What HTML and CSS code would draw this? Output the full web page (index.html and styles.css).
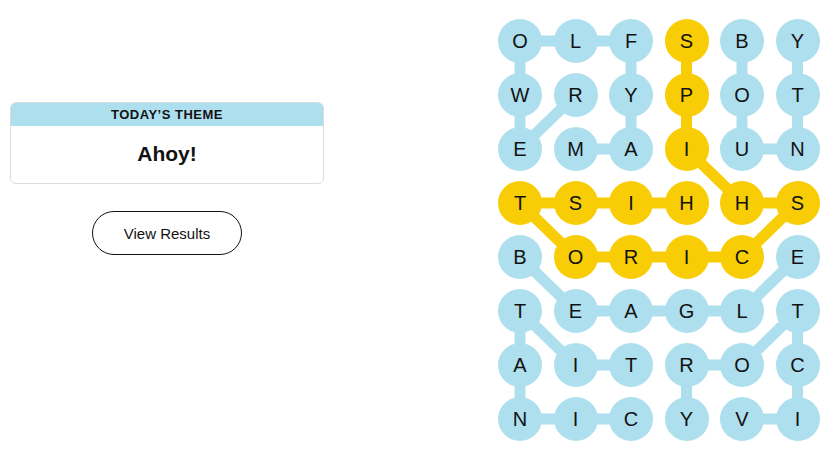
FILE: index.html
```html
<!DOCTYPE html>
<html lang="en">
<head>
    <meta charset="UTF-8">
    <meta name="viewport" content="width=device-width, initial-scale=1.0">
    <title>Strands</title>
    <link rel="stylesheet" href="styles.css">
</head>
<body>
    <div id="game">
        <div id="sidebar">
            <div class="theme-card">
                <div class="theme-label">Today’s Theme</div>
                <div class="theme-name">Ahoy!</div>
            </div>
            <button class="results-button">View Results</button>
        </div>

        <div id="board">
            <svg class="links" width="322" height="422" viewBox="0 0 322 422">
                <g class="theme-links">
                    <line x1="22" y1="22" x2="133" y2="22"/>
                    <line x1="22" y1="22" x2="22" y2="130"/>
                    <line x1="22" y1="130" x2="77.5" y2="76"/>
                    <line x1="133" y1="22" x2="133" y2="130"/>
                    <line x1="77.5" y1="130" x2="133" y2="130"/>
                    <line x1="244" y1="22" x2="244" y2="130"/>
                    <line x1="244" y1="130" x2="299.5" y2="130"/>
                    <line x1="299.5" y1="130" x2="299.5" y2="22"/>
                    <line x1="22" y1="238" x2="77.5" y2="292"/>
                    <line x1="77.5" y1="292" x2="244" y2="292"/>
                    <line x1="244" y1="292" x2="299.5" y2="238"/>
                    <line x1="22" y1="292" x2="22" y2="400"/>
                    <line x1="22" y1="292" x2="77.5" y2="346"/>
                    <line x1="77.5" y1="346" x2="133" y2="346"/>
                    <line x1="22" y1="400" x2="133" y2="400"/>
                    <line x1="188.5" y1="346" x2="244" y2="346"/>
                    <line x1="188.5" y1="346" x2="188.5" y2="400"/>
                    <line x1="244" y1="346" x2="299.5" y2="292"/>
                    <line x1="299.5" y1="292" x2="299.5" y2="400"/>
                    <line x1="244" y1="400" x2="299.5" y2="400"/>
                </g>
                <polyline class="spangram-link" points="188.5,22 188.5,130 244,184 299.5,184 244,238 77.5,238 22,184 188.5,184"/>
            </svg>

            <div class="cell">O</div><div class="cell">L</div><div class="cell">F</div><div class="cell spangram">S</div><div class="cell">B</div><div class="cell">Y</div>
            <div class="cell">W</div><div class="cell">R</div><div class="cell">Y</div><div class="cell spangram">P</div><div class="cell">O</div><div class="cell">T</div>
            <div class="cell">E</div><div class="cell">M</div><div class="cell">A</div><div class="cell spangram">I</div><div class="cell">U</div><div class="cell">N</div>
            <div class="cell spangram">T</div><div class="cell spangram">S</div><div class="cell spangram">I</div><div class="cell spangram">H</div><div class="cell spangram">H</div><div class="cell spangram">S</div>
            <div class="cell">B</div><div class="cell spangram">O</div><div class="cell spangram">R</div><div class="cell spangram">I</div><div class="cell spangram">C</div><div class="cell">E</div>
            <div class="cell">T</div><div class="cell">E</div><div class="cell">A</div><div class="cell">G</div><div class="cell">L</div><div class="cell">T</div>
            <div class="cell">A</div><div class="cell">I</div><div class="cell">T</div><div class="cell">R</div><div class="cell">O</div><div class="cell">C</div>
            <div class="cell">N</div><div class="cell">I</div><div class="cell">C</div><div class="cell">Y</div><div class="cell">V</div><div class="cell">I</div>
        </div>
    </div>
</body>
</html>
```

FILE: styles.css
```css
body {
    margin: 0;
    background-color: #ffffff;
    font-family: "Liberation Sans", Arial, sans-serif;
    color: #121212;
}
#game {
    display: flex;
    align-items: flex-start;
    padding: 19px 0 0 10px;
}
#sidebar {
    width: 314px;
    margin-top: 83px;
    display: flex;
    flex-direction: column;
    align-items: center;
}
.theme-card {
    width: 100%;
    box-sizing: border-box;
    border: 1px solid #dcdcdc;
    border-radius: 6px;
    overflow: hidden;
    text-align: center;
}
.theme-label {
    background-color: #aedfee;
    height: 23px;
    line-height: 24px;
    font-size: 13px;
    font-weight: bold;
    letter-spacing: 0.5px;
    text-transform: uppercase;
}
.theme-name {
    height: 57px;
    line-height: 56px;
    font-size: 21px;
    font-weight: bold;
}
.results-button {
    margin-top: 27px;
    width: 150px;
    height: 44px;
    background: #ffffff;
    border: 1px solid #121212;
    border-radius: 22px;
    font-family: "Liberation Sans", Arial, sans-serif;
    font-size: 15px;
    color: #121212;
    cursor: pointer;
}
#board {
    position: relative;
    margin-left: 174px;
    display: grid;
    grid-template-columns: repeat(6, 44px);
    grid-auto-rows: 44px;
    column-gap: 11.5px;
    row-gap: 10px;
}
.links {
    position: absolute;
    left: 0;
    top: 0;
}
.theme-links line {
    stroke: #aedfee;
    stroke-width: 11;
    stroke-linecap: round;
}
.spangram-link {
    fill: none;
    stroke: #f8cd05;
    stroke-width: 11;
    stroke-linecap: round;
    stroke-linejoin: round;
}
.cell {
    position: relative;
    width: 44px;
    height: 44px;
    border-radius: 50%;
    background-color: #aedfee;
    display: flex;
    justify-content: center;
    align-items: center;
    font-size: 20px;
}
.cell.spangram {
    background-color: #f8cd05;
}
```
